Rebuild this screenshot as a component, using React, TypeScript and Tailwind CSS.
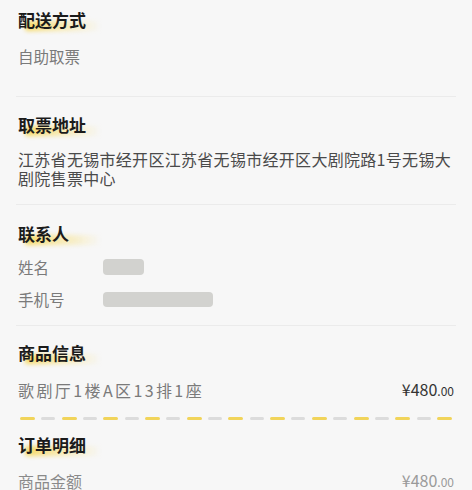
import React from 'react';

const font = { fontFamily: '"Noto Sans CJK SC", "Noto Sans", sans-serif' };

function Title({ text }: { text: string }) {
    return (
        <div className="relative inline-block h-[24px] text-[17px] leading-[24px] font-bold text-[#1b1b1b]">
            <span className="absolute left-[7px] top-[13px] h-[10px] w-[76px] rounded-[3px] bg-gradient-to-r from-[#f5d347]/85 via-[#f8e38a]/60 to-transparent blur-[2px]"></span>
            <span className="relative">{text}</span>
        </div>
    );
}

function Price({ light }: { light?: boolean }) {
    return (
        <span className={light ? 'text-[#9a9a9a]' : 'text-[#333]'}>
            <span className="text-[16px]">¥480</span>
            <span className="text-[12px]">.00</span>
        </span>
    );
}

function Divider() {
    return <div className="mx-[16px] h-px bg-[#ebebeb]"></div>;
}

export default function App() {
    const dashes = Array.from({ length: 21 }, (_, i) => i);

    return (
        <div className="h-[490px] w-[472px] overflow-hidden bg-[#f7f7f7]" style={font}>
            {/* 配送方式 */}
            <section className="px-[18px] pb-[30px] pt-[8px]">
                <Title text="配送方式" />
                <div className="mt-[14px] text-[15.5px] leading-[20px] text-[#7a7a7a]">自助取票</div>
            </section>
            <Divider />

            {/* 取票地址 */}
            <section className="px-[18px] pb-[16px] pt-[16px]">
                <Title text="取票地址" />
                <div className="mt-[13px] text-[16px] leading-[19px] tracking-[0.3px] text-[#4a4a4a]">
                    江苏省无锡市经开区江苏省无锡市经开区大剧院路1号无锡大剧院售票中心
                </div>
            </section>
            <Divider />

            {/* 联系人 */}
            <section className="px-[18px] pb-[16px] pt-[17px]">
                <Title text="联系人" />
                <div className="mt-[11px] flex flex-col gap-[12px] text-[15.5px] leading-[20px] text-[#7a7a7a]">
                    <div className="flex items-center">
                        <span className="w-[85px]">姓名</span>
                        <span className="h-[16px] w-[41px] rounded-[4px] bg-[#d2d2cf]"></span>
                    </div>
                    <div className="flex items-center">
                        <span className="w-[85px]">手机号</span>
                        <span className="h-[15px] w-[110px] rounded-[4px] bg-[#d2d2cf]"></span>
                    </div>
                </div>
            </section>
            <Divider />

            {/* 商品信息 */}
            <section className="px-[18px] pt-[15px]">
                <Title text="商品信息" />
                <div className="mt-[14px] flex items-center justify-between text-[16px] leading-[20px]">
                    <span className="tracking-[2.4px] text-[#7a7a7a]">歌剧厅1楼A区13排1座</span>
                    <Price />
                </div>
                <div className="mt-[16px] flex justify-between px-[2px]">
                    {dashes.map((i) => (
                        <span
                            key={i}
                            className={
                                i % 2 === 0
                                    ? 'h-[3px] w-[15px] rounded-full bg-[#f1d45a]'
                                    : 'h-[3px] w-[14px] rounded-full bg-[#dcdcdc]'
                            }
                        ></span>
                    ))}
                </div>
            </section>

            {/* 订单明细 */}
            <section className="px-[18px] pt-[13px]">
                <Title text="订单明细" />
                <div className="mt-[13px] flex items-center justify-between text-[16px] leading-[20px]">
                    <span className="text-[#8a8a8a]">商品金额</span>
                    <Price light />
                </div>
            </section>
        </div>
    );
}
